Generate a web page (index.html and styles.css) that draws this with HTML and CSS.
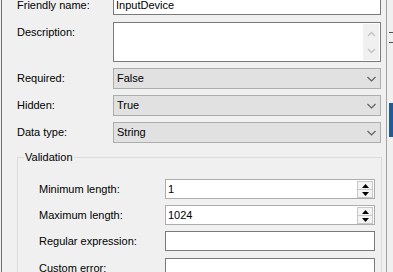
FILE: index.html
```html
<!DOCTYPE html>
<html>
<head>
<meta charset="utf-8">
<link rel="stylesheet" href="styles.css">
</head>
<body>
<div class="screen">
  <div class="panel">
    <div class="row r-friendly">
      <div class="label">Friendly name:</div>
      <div class="field textbox"><span class="val">InputDevice</span></div>
    </div>
    <div class="row r-desc">
      <div class="label">Description:</div>
      <div class="field textbox memo">
        <div class="vscroll">
          <svg width="9" height="6" viewBox="0 0 9 6"><path d="M1 5 L4.5 1.5 L8 5" fill="none" stroke="#c2c2c2" stroke-width="1.4"/></svg>
          <svg width="9" height="6" viewBox="0 0 9 6"><path d="M1 1 L4.5 4.5 L8 1" fill="none" stroke="#c2c2c2" stroke-width="1.4"/></svg>
        </div>
      </div>
    </div>
    <div class="row r-req">
      <div class="label">Required:</div>
      <div class="field combo"><span class="val">False</span>
        <svg class="chev" width="9" height="6" viewBox="0 0 9 6"><path d="M0.5 1 L4.5 5 L8.5 1" fill="none" stroke="#606060" stroke-width="1.2"/></svg>
      </div>
    </div>
    <div class="row r-hid">
      <div class="label">Hidden:</div>
      <div class="field combo"><span class="val">True</span>
        <svg class="chev" width="9" height="6" viewBox="0 0 9 6"><path d="M0.5 1 L4.5 5 L8.5 1" fill="none" stroke="#606060" stroke-width="1.2"/></svg>
      </div>
    </div>
    <div class="row r-type">
      <div class="label">Data type:</div>
      <div class="field combo"><span class="val">String</span>
        <svg class="chev" width="9" height="6" viewBox="0 0 9 6"><path d="M0.5 1 L4.5 5 L8.5 1" fill="none" stroke="#606060" stroke-width="1.2"/></svg>
      </div>
    </div>
    <fieldset class="group">
      <legend>Validation</legend>
      <div class="grow g-min">
        <div class="glabel">Minimum length:</div>
        <div class="gfield spin"><span class="val">1</span>
          <div class="spinbtns">
            <div class="sb"><svg width="7" height="4" viewBox="0 0 7 4"><path d="M0 4 L3.5 0 L7 4Z" fill="#000"/></svg></div>
            <div class="sb"><svg width="7" height="4" viewBox="0 0 7 4"><path d="M0 0 L3.5 4 L7 0Z" fill="#000"/></svg></div>
          </div>
        </div>
      </div>
      <div class="grow g-max">
        <div class="glabel">Maximum length:</div>
        <div class="gfield spin"><span class="val">1024</span>
          <div class="spinbtns">
            <div class="sb"><svg width="7" height="4" viewBox="0 0 7 4"><path d="M0 4 L3.5 0 L7 4Z" fill="#000"/></svg></div>
            <div class="sb"><svg width="7" height="4" viewBox="0 0 7 4"><path d="M0 0 L3.5 4 L7 0Z" fill="#000"/></svg></div>
          </div>
        </div>
      </div>
      <div class="grow g-re">
        <div class="glabel">Regular expression:</div>
        <div class="gfield textbox"></div>
      </div>
      <div class="grow g-err">
        <div class="glabel">Custom error:</div>
        <div class="gfield textbox"></div>
      </div>
    </fieldset>
  </div>
  <div class="behind">
    <div class="bl bl1"></div>
    <div class="bl bl2"></div>
    <div class="blue"></div>
  </div>
</div>
</body>
</html>
```
FILE: styles.css
```css
html, body {
  margin: 0;
  padding: 0;
  background: #f0f0f0;
  overflow: hidden;
}
body {
  width: 393px;
  height: 272px;
  font-family: "Liberation Sans", Arial, sans-serif;
  font-size: 11px;
  color: #000;
}
.screen {
  display: flex;
  height: 272px;
  padding-left: 1px;
  background: #f0f0f0;
}
.panel {
  flex: none;
  width: 385px;
  border-left: 1px solid #6e6e6e;
  padding-left: 15px;
  margin-top: -5px;
  box-sizing: border-box;
  background: #f0f0f0;
}
.row {
  display: flex;
  align-items: flex-start;
}
.label {
  width: 96px;
  height: 20px;
  line-height: 20px;
  flex: none;
  white-space: nowrap;
}
.field {
  width: 268px;
  box-sizing: border-box;
  position: relative;
  flex: none;
}
.textbox {
  border: 1px solid #7a7a7a;
  background: #fff;
  height: 20px;
}
.val {
  display: block;
  line-height: 18px;
  padding-left: 2px;
  white-space: nowrap;
}
.r-desc { margin-top: 7px; }
.memo { height: 40px; }
.vscroll {
  position: absolute;
  right: 1px;
  top: 1px;
  bottom: 1px;
  width: 16px;
  background: #f0f0f0;
  display: flex;
  flex-direction: column;
  align-items: center;
  justify-content: space-between;
  padding: 7px 0 6px;
  box-sizing: border-box;
}
.combo {
  height: 21px;
  border: 1px solid #adadad;
  background: #e1e1e1;
}
.combo .val { line-height: 19px; padding-left: 3px; }
.r-req { margin-top: 6px; }
.r-req .label, .r-hid .label, .r-type .label { height: 21px; line-height: 21px; }
.r-hid { margin-top: 6px; }
.r-type { margin-top: 6px; }
.chev {
  position: absolute;
  right: 4px;
  top: 7px;
}
.group {
  margin: 8px 0 0 0;
  width: 365px;
  box-sizing: border-box;
  border: 1px solid #dcdcdc;
  padding: 15px 0 0 0;
  height: 140px;
}
.group legend {
  padding: 0 1px;
  margin-left: 6px;
  line-height: 13px;
}
.grow {
  display: flex;
  align-items: flex-start;
  margin-left: 21px;
  margin-bottom: 6px;
}
.glabel {
  width: 126px;
  height: 20px;
  line-height: 20px;
  flex: none;
  white-space: nowrap;
}
.gfield {
  width: 210px;
  height: 20px;
  box-sizing: border-box;
  position: relative;
  flex: none;
}
.spin {
  border: 1px solid #adadad;
  background: #fff;
}
.spinbtns {
  position: absolute;
  right: 1px;
  top: 1px;
  width: 16px;
  height: 17px;
  display: flex;
  flex-direction: column;
}
.sb {
  flex: 1;
  border: 1px solid #c8c8c8;
  background: #f4f4f4;
  display: flex;
  align-items: center;
  justify-content: center;
  box-sizing: border-box;
}
.sb + .sb { border-top: none; }
.g-re { margin-bottom: 7px; }
.behind {
  flex: 1;
  border-left: 1px solid #a0a0a0;
  background: #f0f0f0;
  position: relative;
}
.bl {
  position: absolute;
  left: 2px;
  right: 0;
  height: 1px;
  background: #505050;
}
.bl1 { top: 32px; }
.bl2 { top: 42px; }
.blue {
  position: absolute;
  left: 2px;
  right: 0;
  top: 103px;
  height: 34px;
  background: #1f5c99;
}
```
